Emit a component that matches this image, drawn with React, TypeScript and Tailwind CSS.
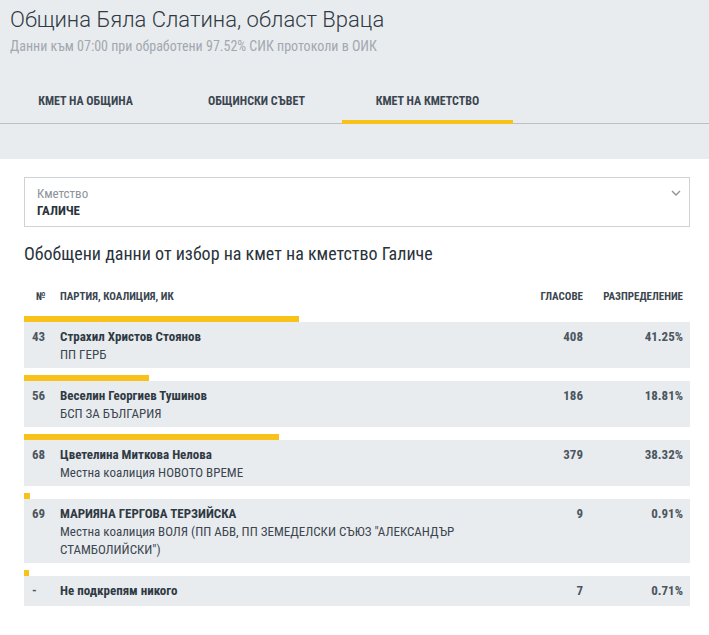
import React from "react";

type Row = {
  no: string;
  name: string;
  party: string;
  votes: number;
  pct: number;
};

const rows: Row[] = [
  { no: "43", name: "Страхил Христов Стоянов", party: "ПП ГЕРБ", votes: 408, pct: 41.25 },
  { no: "56", name: "Веселин Георгиев Тушинов", party: "БСП ЗА БЪЛГАРИЯ", votes: 186, pct: 18.81 },
  { no: "68", name: "Цветелина Миткова Нелова", party: "Местна коалиция НОВОТО ВРЕМЕ", votes: 379, pct: 38.32 },
  {
    no: "69",
    name: "МАРИЯНА ГЕРГОВА ТЕРЗИЙСКА",
    party: 'Местна коалиция ВОЛЯ (ПП АБВ, ПП ЗЕМЕДЕЛСКИ СЪЮЗ "АЛЕКСАНДЪР СТАМБОЛИЙСКИ")',
    votes: 9,
    pct: 0.91,
  },
  { no: "-", name: "Не подкрепям никого", party: "", votes: 7, pct: 0.71 },
];

const tabs = ["КМЕТ НА ОБЩИНА", "ОБЩИНСКИ СЪВЕТ", "КМЕТ НА КМЕТСТВО"];

function App() {
  return (
    <div className="bg-white text-[#333c45] font-['Roboto_Condensed','Liberation_Sans_Narrow','DejaVu_Sans_Condensed',sans-serif]">
      <div className="bg-[#e9ecef]">
        <div className="px-[10px] pt-[6px]">
          <h1 className="font-['Roboto',sans-serif] font-light text-[22px] leading-[28px] text-[#2f3a44]">
            Община Бяла Слатина, област Враца
          </h1>
          <p className="text-[14px] leading-[18px] mt-[3px] text-[#a1a8af]">
            Данни към 07:00 при обработени 97.52% СИК протоколи в ОИК
          </p>
        </div>
        <div className="mt-[34px] flex border-b border-[#bcc0c4]">
          {tabs.map((t, i) => (
            <div
              key={t}
              className={
                "w-[171px] flex justify-center pb-[10px] pt-[3px] border-b-4 -mb-px text-[12px] font-bold text-[#3b4650] " +
                (i === 2 ? "border-[#f9c21b]" : "border-transparent")
              }
            >
              {t}
            </div>
          ))}
        </div>
        <div className="h-[35px]" />
      </div>

      <div className="pl-[24px] pr-[19px] pt-[18px]">
        <div className="h-[50px] border border-[#cfd3d6] flex justify-between pl-[12px] pr-[7px] pt-[8px]">
          <div>
            <div className="text-[13px] leading-[16px] text-[#8c949b]">Кметство</div>
            <div className="text-[13px] leading-[18px] font-bold text-[#2a333b]">ГАЛИЧЕ</div>
          </div>
          <svg width="12" height="12" viewBox="0 0 12 12" className="mt-[1px]">
            <path d="M2 4 L6 8 L10 4" fill="none" stroke="#8d959c" strokeWidth="1.4" />
          </svg>
        </div>

        <h2 className="mt-[15px] text-[18px] leading-[24px] text-[#2a333b]">
          Обобщени данни от избор на кмет на кметство Галиче
        </h2>

        <div className="mt-[23px] flex items-center text-[11px] font-bold text-[#3b4650] pr-[7px]">
          <div className="w-[36px] pl-[12px]">№</div>
          <div className="flex-1">ПАРТИЯ, КОАЛИЦИЯ, ИК</div>
          <div className="w-[80px] text-right">ГЛАСОВЕ</div>
          <div className="w-[100px] text-right">РАЗПРЕДЕЛЕНИЕ</div>
        </div>

        <div className="mt-[10px] flex flex-col gap-[7px]">
          {rows.map((r) => (
            <div key={r.no + r.name}>
              <div className="h-[6px] bg-[#f9c21b]" style={{ width: `${Math.max(r.pct, 0.7)}%` }} />
              <div className="bg-[#e9ecef] flex text-[13px] leading-[18px] pt-[6px] pb-[4px] pr-[7px] min-h-[30px]">
                <div className="w-[36px] pl-[8px] font-bold text-[#4b5660]">{r.no}</div>
                <div className="flex-1 pr-[10px]">
                  <div className="font-bold text-[#2f3a44]">{r.name}</div>
                  {r.party && <div className="text-[#3b4650]">{r.party}</div>}
                </div>
                <div className="w-[80px] text-right font-bold text-[#4b5660]">{r.votes}</div>
                <div className="w-[100px] text-right font-bold text-[#4b5660]">{r.pct.toFixed(2)}%</div>
              </div>
            </div>
          ))}
        </div>
      </div>
    </div>
  );
}

export default App;
